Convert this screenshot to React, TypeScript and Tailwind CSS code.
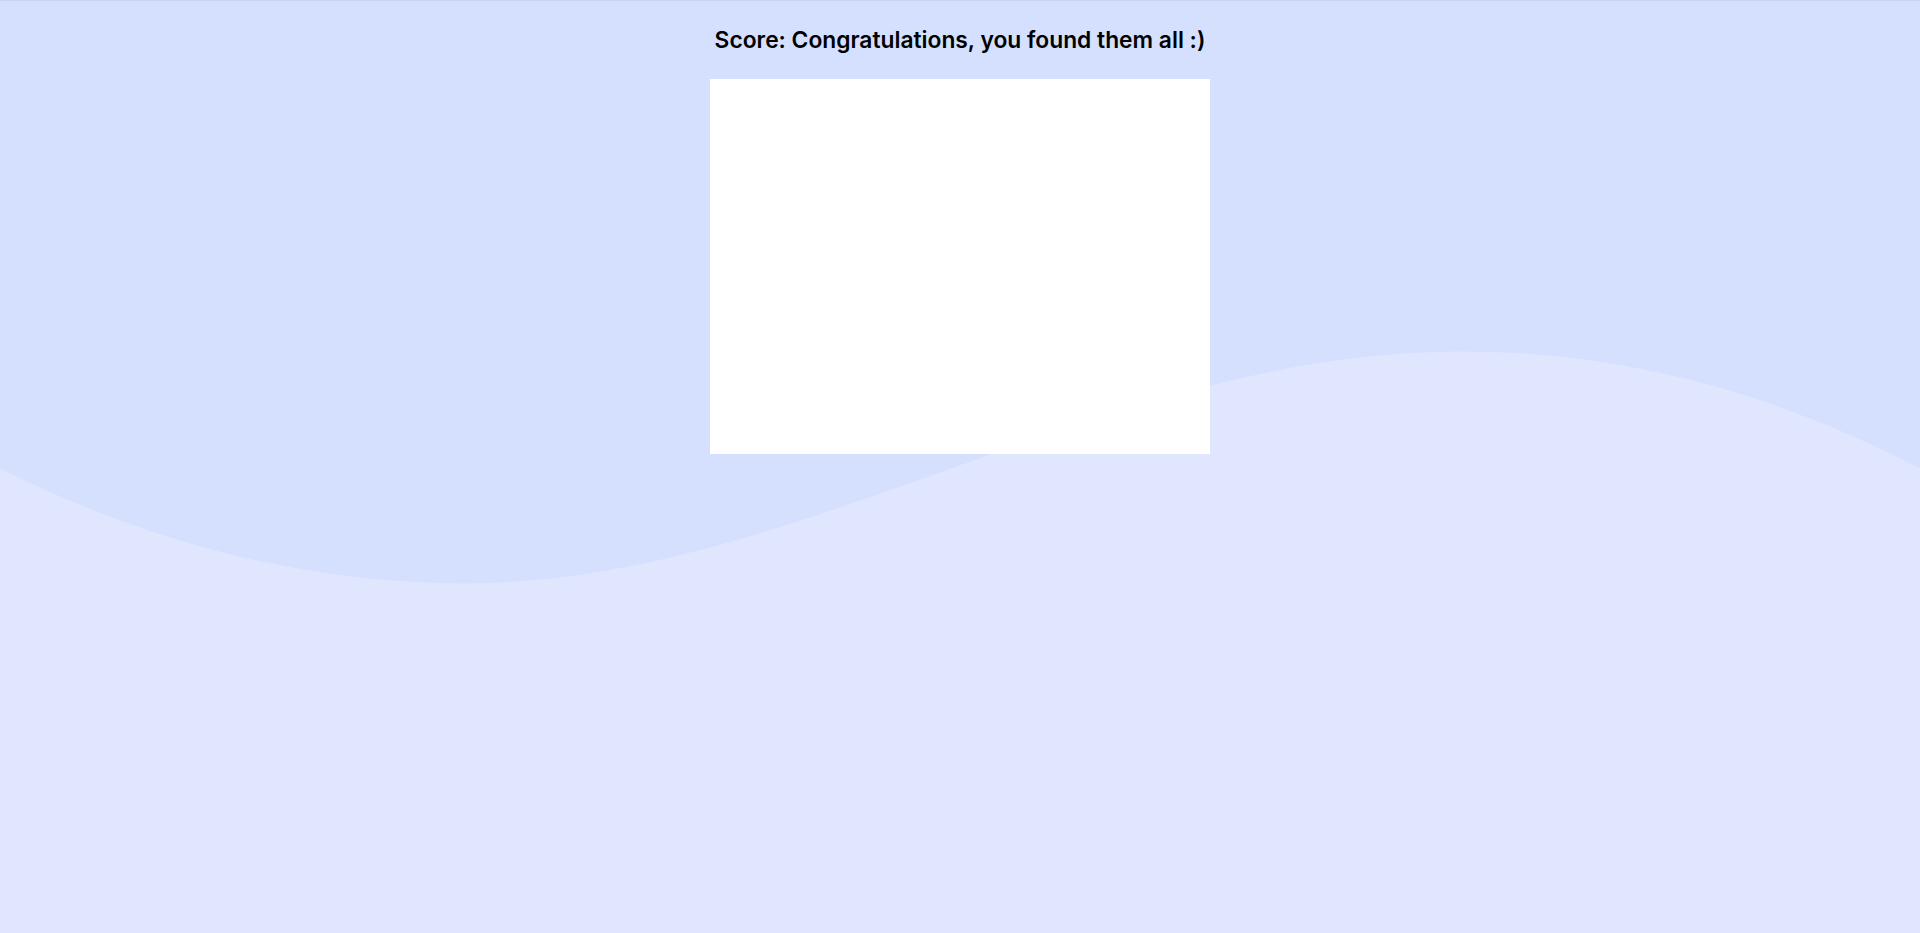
export default function App() {
  return (
    <div className="relative min-h-screen overflow-hidden bg-[#d5e0fe] border-t border-[#c8d3f0]">
      <svg
        className="absolute inset-0 w-full h-full"
        viewBox="0 0 1920 933"
        preserveAspectRatio="none"
      >
        <path
          d="M0,468 C155,545 310,583 465,583 C800,583 1100,351 1463,351 C1620,351 1770,390 1920,468 L1920,933 L0,933 Z"
          fill="#dfe6fe"
        />
      </svg>
      <div className="relative flex flex-col items-center">
        <h2 className="mt-[22px] mb-[22px] text-[22.8px] leading-[34px] font-semibold text-black font-['Inter',sans-serif]">
          Score: Congratulations, you found them all :)
        </h2>
        <div className="w-[500px] h-[375px] bg-white" />
      </div>
    </div>
  );
}
